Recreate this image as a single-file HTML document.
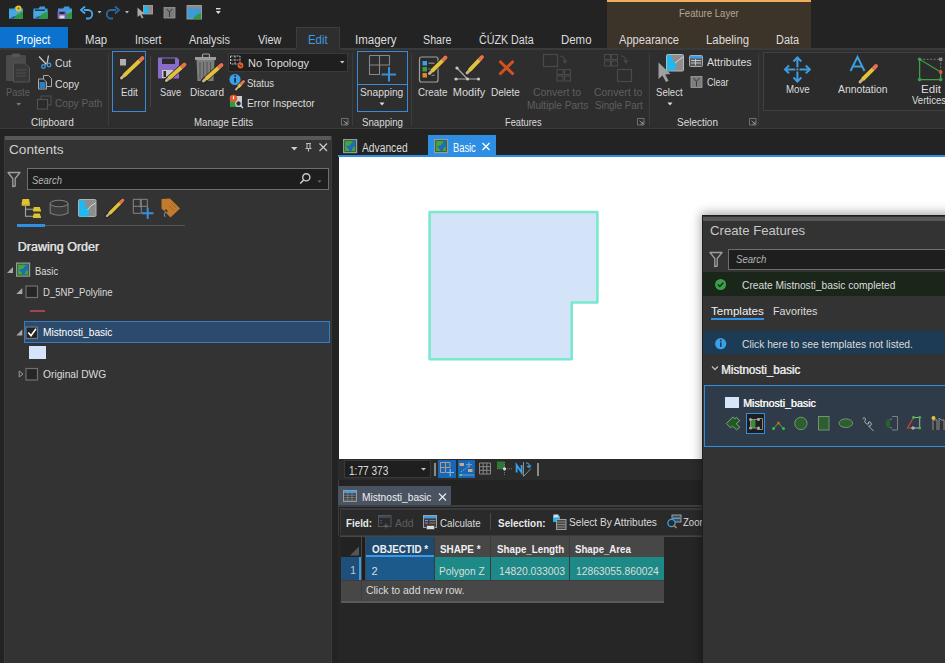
<!DOCTYPE html>
<html><head><meta charset="utf-8">
<style>
*{margin:0;padding:0;box-sizing:border-box}
html,body{width:945px;height:663px;overflow:hidden;background:#1f1f1f;font-family:"Liberation Sans",sans-serif;color:#e6e6e6;position:relative}
.a{position:absolute}
.t{position:absolute;white-space:nowrap}
svg{position:absolute;overflow:visible}
</style></head><body>
<div class="a" style="left:0px;top:0px;width:945px;height:27px;background:#232323;"></div>
<div class="a" style="left:0px;top:27px;width:945px;height:21px;background:#232323;"></div>
<div class="a" style="left:607px;top:0px;width:204px;height:48px;background:#3d3429;"></div>
<div class="a" style="left:607px;top:0px;width:204px;height:1.6px;background:#f0ad5c;"></div>
<div class="t" style="left:678.50px;top:7.89px;font-size:11px;line-height:11px;color:#b3a795;transform:scaleX(0.8725);transform-origin:0 0;">Feature Layer</div>
<div class="a" style="left:0px;top:27px;width:68px;height:21px;background:#0b72cf;"></div>
<div class="t" style="left:15.90px;top:34.24px;font-size:12px;line-height:12px;color:#ffffff;transform:scaleX(0.9184);transform-origin:0 0;">Project</div>
<div class="t" style="left:84.80px;top:34.24px;font-size:12px;line-height:12px;color:#dcdcdc;transform:scaleX(0.9500);transform-origin:0 0;">Map</div>
<div class="t" style="left:134.60px;top:34.24px;font-size:12px;line-height:12px;color:#dcdcdc;transform:scaleX(0.8839);transform-origin:0 0;">Insert</div>
<div class="t" style="left:189.00px;top:34.24px;font-size:12px;line-height:12px;color:#dcdcdc;transform:scaleX(0.9156);transform-origin:0 0;">Analysis</div>
<div class="t" style="left:257.50px;top:34.24px;font-size:12px;line-height:12px;color:#dcdcdc;transform:scaleX(0.9038);transform-origin:0 0;">View</div>
<div class="a" style="left:296px;top:27px;width:44px;height:23px;background:#2e2e2e;border:1px solid #3d3d3d;border-bottom:none"></div>
<div class="t" style="left:307.60px;top:34.24px;font-size:12px;line-height:12px;color:#3f9ae6;transform:scaleX(0.9524);transform-origin:0 0;">Edit</div>
<div class="t" style="left:355.20px;top:34.24px;font-size:12px;line-height:12px;color:#dcdcdc;transform:scaleX(0.9605);transform-origin:0 0;">Imagery</div>
<div class="t" style="left:422.90px;top:34.24px;font-size:12px;line-height:12px;color:#dcdcdc;transform:scaleX(0.8906);transform-origin:0 0;">Share</div>
<div class="t" style="left:478.50px;top:34.24px;font-size:12px;line-height:12px;color:#dcdcdc;transform:scaleX(0.8903);transform-origin:0 0;">ČÚZK Data</div>
<div class="t" style="left:560.70px;top:34.24px;font-size:12px;line-height:12px;color:#dcdcdc;transform:scaleX(0.9531);transform-origin:0 0;">Demo</div>
<div class="t" style="left:619.00px;top:34.24px;font-size:12px;line-height:12px;color:#dcdcdc;transform:scaleX(0.9262);transform-origin:0 0;">Appearance</div>
<div class="t" style="left:705.90px;top:34.24px;font-size:12px;line-height:12px;color:#dcdcdc;transform:scaleX(0.9489);transform-origin:0 0;">Labeling</div>
<div class="t" style="left:776.30px;top:34.24px;font-size:12px;line-height:12px;color:#dcdcdc;transform:scaleX(0.9115);transform-origin:0 0;">Data</div>
<div class="a" style="left:0px;top:48px;width:945px;height:81px;background:#2e2e2e;"></div>
<div class="a" style="left:0px;top:48px;width:296px;height:1.5px;background:#3a3a3a;"></div>
<div class="a" style="left:340px;top:48px;width:605px;height:1.5px;background:#3a3a3a;"></div>
<div class="a" style="left:0px;top:128px;width:945px;height:1px;background:#3a3a3a;"></div>
<div class="a" style="left:108px;top:53px;width:1px;height:73px;background:#3c3c3c;"></div>
<div class="a" style="left:352px;top:53px;width:1px;height:73px;background:#3c3c3c;"></div>
<div class="a" style="left:411px;top:53px;width:1px;height:73px;background:#3c3c3c;"></div>
<div class="a" style="left:649px;top:53px;width:1px;height:73px;background:#3c3c3c;"></div>
<div class="a" style="left:758px;top:53px;width:1px;height:73px;background:#3c3c3c;"></div>
<div class="a" style="left:150px;top:56px;width:1px;height:51px;background:#444;"></div>
<div class="t" style="left:6.00px;top:87.09px;font-size:11px;line-height:11px;color:#5e5e5e;transform:scaleX(0.8464);transform-origin:0 0;">Paste</div>
<div class="t" style="left:54.50px;top:58.29px;font-size:11px;line-height:11px;color:#dcdcdc;transform:scaleX(0.9412);transform-origin:0 0;">Cut</div>
<div class="t" style="left:54.50px;top:78.89px;font-size:11px;line-height:11px;color:#dcdcdc;transform:scaleX(0.9423);transform-origin:0 0;">Copy</div>
<div class="t" style="left:54.50px;top:98.29px;font-size:11px;line-height:11px;color:#5e5e5e;transform:scaleX(0.9216);transform-origin:0 0;">Copy Path</div>
<div class="t" style="left:31.00px;top:116.89px;font-size:11px;line-height:11px;color:#dcdcdc;transform:scaleX(0.9064);transform-origin:0 0;">Clipboard</div>
<div class="a" style="left:112px;top:51px;width:34px;height:61px;background:transparent;border:1px solid #3a8ad8;"></div>
<div class="t" style="left:121.40px;top:87.09px;font-size:11px;line-height:11px;color:#dcdcdc;transform:scaleX(0.8842);transform-origin:0 0;">Edit</div>
<div class="t" style="left:159.50px;top:87.09px;font-size:11px;line-height:11px;color:#dcdcdc;transform:scaleX(0.8400);transform-origin:0 0;">Save</div>
<div class="t" style="left:189.70px;top:87.09px;font-size:11px;line-height:11px;color:#dcdcdc;transform:scaleX(0.9108);transform-origin:0 0;">Discard</div>
<div class="a" style="left:228px;top:52.5px;width:120px;height:19px;background:#1f1f1f;border:1px solid #3a3a3a;"></div>
<div class="t" style="left:248.10px;top:57.99px;font-size:11px;line-height:11px;color:#dcdcdc;">No Topology</div>
<div class="t" style="left:246.80px;top:78.49px;font-size:11px;line-height:11px;color:#dcdcdc;transform:scaleX(0.8688);transform-origin:0 0;">Status</div>
<div class="t" style="left:246.80px;top:98.29px;font-size:11px;line-height:11px;color:#dcdcdc;transform:scaleX(0.9315);transform-origin:0 0;">Error Inspector</div>
<div class="t" style="left:194.40px;top:116.89px;font-size:11px;line-height:11px;color:#dcdcdc;transform:scaleX(0.8765);transform-origin:0 0;">Manage Edits</div>
<div class="a" style="left:357px;top:51px;width:51px;height:61px;background:transparent;border:1px solid #3a8ad8;"></div>
<div class="a" style="left:358px;top:84px;width:49px;height:1px;background:#3a8ad8;"></div>
<div class="t" style="left:359.70px;top:87.09px;font-size:11px;line-height:11px;color:#dcdcdc;transform:scaleX(0.9319);transform-origin:0 0;">Snapping</div>
<div class="t" style="left:361.60px;top:116.89px;font-size:11px;line-height:11px;color:#dcdcdc;transform:scaleX(0.8809);transform-origin:0 0;">Snapping</div>
<div class="t" style="left:417.70px;top:87.09px;font-size:11px;line-height:11px;color:#dcdcdc;transform:scaleX(0.8879);transform-origin:0 0;">Create</div>
<div class="t" style="left:452.80px;top:87.09px;font-size:11px;line-height:11px;color:#dcdcdc;">Modify</div>
<div class="t" style="left:491.20px;top:87.09px;font-size:11px;line-height:11px;color:#dcdcdc;transform:scaleX(0.9094);transform-origin:0 0;">Delete</div>
<div class="t" style="left:533.10px;top:87.09px;font-size:11px;line-height:11px;color:#5e5e5e;transform:scaleX(0.9451);transform-origin:0 0;">Convert to</div>
<div class="t" style="left:526.60px;top:100.49px;font-size:11px;line-height:11px;color:#5e5e5e;transform:scaleX(0.9209);transform-origin:0 0;">Multiple Parts</div>
<div class="t" style="left:594.10px;top:87.09px;font-size:11px;line-height:11px;color:#5e5e5e;transform:scaleX(0.9510);transform-origin:0 0;">Convert to</div>
<div class="t" style="left:594.80px;top:100.49px;font-size:11px;line-height:11px;color:#5e5e5e;transform:scaleX(0.8852);transform-origin:0 0;">Single Part</div>
<div class="t" style="left:504.70px;top:116.89px;font-size:11px;line-height:11px;color:#dcdcdc;transform:scaleX(0.8409);transform-origin:0 0;">Features</div>
<div class="t" style="left:656.00px;top:87.09px;font-size:11px;line-height:11px;color:#dcdcdc;transform:scaleX(0.8710);transform-origin:0 0;">Select</div>
<div class="t" style="left:706.90px;top:57.49px;font-size:11px;line-height:11px;color:#dcdcdc;transform:scaleX(0.9596);transform-origin:0 0;">Attributes</div>
<div class="t" style="left:706.90px;top:77.49px;font-size:11px;line-height:11px;color:#dcdcdc;transform:scaleX(0.8185);transform-origin:0 0;">Clear</div>
<div class="t" style="left:676.70px;top:116.89px;font-size:11px;line-height:11px;color:#dcdcdc;transform:scaleX(0.9044);transform-origin:0 0;">Selection</div>
<div class="a" style="left:763px;top:52px;width:190px;height:59px;background:#2b2b2b;border:1px solid #404040;"></div>
<div class="t" style="left:785.60px;top:83.89px;font-size:11px;line-height:11px;color:#dcdcdc;transform:scaleX(0.8815);transform-origin:0 0;">Move</div>
<div class="t" style="left:838.00px;top:83.89px;font-size:11px;line-height:11px;color:#dcdcdc;transform:scaleX(0.9415);transform-origin:0 0;">Annotation</div>
<div class="t" style="left:921.00px;top:83.89px;font-size:11px;line-height:11px;color:#dcdcdc;transform:scaleX(1.0526);transform-origin:0 0;">Edit</div>
<div class="t" style="left:912.00px;top:95.09px;font-size:11px;line-height:11px;color:#dcdcdc;transform:scaleX(0.8700);transform-origin:0 0;">Vertices</div>
<div class="a" style="left:0px;top:129px;width:945px;height:534px;background:#232323;"></div>
<div class="a" style="left:4px;top:136px;width:328px;height:527px;background:#3a3a3a;"></div>
<div class="a" style="left:5px;top:136px;width:326px;height:527px;background:#333333;"></div>
<div class="a" style="left:5px;top:136px;width:326px;height:4px;background:#585858;"></div>
<div class="t" style="left:9.40px;top:143.00px;font-size:13px;line-height:13px;color:#cfcfcf;transform:scaleX(1.0509);transform-origin:0 0;">Contents</div>
<div class="a" style="left:27px;top:168px;width:302px;height:22px;background:#1e1e1e;border:1px solid #6e6e6e;"></div>
<div class="t" style="left:32.00px;top:174.69px;font-size:11px;line-height:11px;color:#b5b5b5;font-style:italic;transform:scaleX(0.8571);transform-origin:0 0;">Search</div>
<div class="a" style="left:17px;top:224px;width:28px;height:3px;background:#2f8fe3;"></div>
<div class="a" style="left:45px;top:225px;width:140px;height:1px;background:#555;"></div>
<div class="t" style="left:17.60px;top:240.72px;font-size:12.5px;line-height:12.5px;color:#dedede;text-shadow:0.5px 0 0 #dedede">Drawing Order</div>
<div class="t" style="left:35.00px;top:265.77px;font-size:11.5px;line-height:11.5px;color:#dcdcdc;transform:scaleX(0.8214);transform-origin:0 0;">Basic</div>
<div class="t" style="left:42.50px;top:286.77px;font-size:11.5px;line-height:11.5px;color:#dcdcdc;transform:scaleX(0.8310);transform-origin:0 0;">D_5NP_Polyline</div>
<div class="a" style="left:30px;top:310px;width:15px;height:2px;background:#a04848;"></div>
<div class="a" style="left:24px;top:321px;width:306px;height:22px;background:#2b4a6c;border:1px solid #3a7cc0;"></div>
<div class="t" style="left:42.50px;top:327.37px;font-size:11.5px;line-height:11.5px;color:#ffffff;transform:scaleX(0.8835);transform-origin:0 0;">Mistnosti_basic</div>
<div class="a" style="left:29px;top:346px;width:17px;height:13px;background:#d5e4fa;"></div>
<div class="t" style="left:42.50px;top:368.87px;font-size:11.5px;line-height:11.5px;color:#dcdcdc;transform:scaleX(0.8915);transform-origin:0 0;">Original DWG</div>
<div class="a" style="left:338px;top:459px;width:1px;height:204px;background:#3d3d3d;"></div>
<div class="t" style="left:361.70px;top:141.64px;font-size:12px;line-height:12px;color:#dcdcdc;transform:scaleX(0.8547);transform-origin:0 0;">Advanced</div>
<div class="a" style="left:428px;top:135px;width:68px;height:20px;background:#2d8ee3;"></div>
<div class="t" style="left:452.50px;top:141.64px;font-size:12px;line-height:12px;color:#ffffff;transform:scaleX(0.7759);transform-origin:0 0;">Basic</div>
<div class="a" style="left:338px;top:155px;width:607px;height:2px;background:#2d8ee3;"></div>
<div class="a" style="left:339px;top:157px;width:606px;height:302px;background:#ffffff;"></div>
<svg style="left:420px;top:200px" width="200" height="170" viewBox="0 0 200 170"><path d="M9.6 12 H177.4 V102.5 H151.7 V159.2 H9.6 Z" fill="#d3e3f8" stroke="#7ae8cc" stroke-width="2.6" stroke-linejoin="round"/></svg>
<div class="a" style="left:338px;top:459px;width:607px;height:21px;background:#2b2b2b;"></div>
<div class="a" style="left:344px;top:460px;width:87px;height:18px;background:#1f1f1f;border:1px solid #3a3a3a;"></div>
<div class="t" style="left:349.00px;top:464.74px;font-size:12px;line-height:12px;color:#dcdcdc;transform:scaleX(0.8404);transform-origin:0 0;">1:77 373</div>
<div class="a" style="left:434px;top:463px;width:2px;height:13px;background:#8a8a8a;"></div>
<div class="a" style="left:438px;top:460px;width:18px;height:18px;background:#1667b8;"></div>
<div class="a" style="left:458px;top:460px;width:17px;height:18px;background:#1667b8;"></div>
<div class="a" style="left:537px;top:463px;width:2px;height:13px;background:#8a8a8a;"></div>
<div class="a" style="left:338px;top:486px;width:113px;height:19px;background:#4a5361;"></div>
<div class="t" style="left:361.50px;top:491.57px;font-size:11.5px;line-height:11.5px;color:#f0f0f0;transform:scaleX(0.8835);transform-origin:0 0;">Mistnosti_basic</div>
<div class="a" style="left:338px;top:505px;width:364px;height:2px;background:#3b3f45;"></div>
<div class="a" style="left:339.5px;top:508px;width:363px;height:28px;background:#3a3a3a;"></div>
<div class="a" style="left:341px;top:509.5px;width:361px;height:25px;background:#2a2a2a;"></div>
<div class="t" style="left:345.60px;top:517.59px;font-size:11px;line-height:11px;color:#e8e8e8;font-weight:bold;transform:scaleX(0.8897);transform-origin:0 0;">Field:</div>
<div class="t" style="left:394.90px;top:517.59px;font-size:11px;line-height:11px;color:#5e5e5e;transform:scaleX(0.9550);transform-origin:0 0;">Add</div>
<div class="t" style="left:439.80px;top:517.59px;font-size:11px;line-height:11px;color:#dcdcdc;transform:scaleX(0.8870);transform-origin:0 0;">Calculate</div>
<div class="a" style="left:490px;top:513px;width:1px;height:17px;background:#4a4a4a;"></div>
<div class="t" style="left:497.50px;top:517.59px;font-size:11px;line-height:11px;color:#e8e8e8;font-weight:bold;transform:scaleX(0.9038);transform-origin:0 0;">Selection:</div>
<div class="t" style="left:568.50px;top:517.49px;font-size:11px;line-height:11px;color:#dcdcdc;transform:scaleX(0.9219);transform-origin:0 0;">Select By Attributes</div>
<div class="t" style="left:682.80px;top:517.49px;font-size:11px;line-height:11px;color:#dcdcdc;transform:scaleX(0.8700);transform-origin:0 0;">Zoom To</div>
<div class="a" style="left:338px;top:536px;width:364px;height:127px;background:#262626;"></div>
<div class="a" style="left:340px;top:536px;width:364px;height:1px;background:#474747;"></div>
<div class="a" style="left:341px;top:537px;width:323px;height:65px;background:#474747;"></div>
<div class="a" style="left:341px;top:601px;width:323px;height:1.5px;background:#5a5a5a;"></div>
<div class="a" style="left:341px;top:537px;width:19.5px;height:20px;background:#222222;"></div>
<div class="a" style="left:362px;top:537px;width:3px;height:43px;background:#1e1e1e;"></div>
<div class="a" style="left:366px;top:537px;width:68px;height:20px;background:#1f4a70;"></div>
<div class="a" style="left:366px;top:555px;width:68px;height:2px;background:#3c9be8;"></div>
<div class="t" style="left:371.90px;top:543.79px;font-size:11px;line-height:11px;color:#f0f0f0;font-weight:bold;transform:scaleX(0.8922);transform-origin:0 0;">OBJECTID *</div>
<div class="t" style="left:439.60px;top:543.79px;font-size:11px;line-height:11px;color:#f0f0f0;font-weight:bold;transform:scaleX(0.8957);transform-origin:0 0;">SHAPE *</div>
<div class="t" style="left:496.50px;top:543.79px;font-size:11px;line-height:11px;color:#f0f0f0;font-weight:bold;transform:scaleX(0.8882);transform-origin:0 0;">Shape_Length</div>
<div class="t" style="left:575.30px;top:543.79px;font-size:11px;line-height:11px;color:#f0f0f0;font-weight:bold;transform:scaleX(0.8785);transform-origin:0 0;">Shape_Area</div>
<div class="a" style="left:341px;top:557px;width:18px;height:23px;background:#1e4f78;"></div>
<div class="a" style="left:359px;top:557px;width:2px;height:23px;background:#3c9be8;"></div>
<div class="t" style="left:349.90px;top:564.99px;font-size:11px;line-height:11px;color:#b8c8d8;">1</div>
<div class="a" style="left:366px;top:557px;width:68px;height:23px;background:#1c5a8c;"></div>
<div class="a" style="left:434px;top:557px;width:230px;height:23px;background:#1d8a87;"></div>
<div class="a" style="left:433.5px;top:537px;width:1px;height:43px;background:#3a3a3a;"></div>
<div class="a" style="left:490px;top:537px;width:1px;height:43px;background:#3a3a3a;"></div>
<div class="a" style="left:569px;top:537px;width:1px;height:43px;background:#3a3a3a;"></div>
<div class="a" style="left:341px;top:579.5px;width:323px;height:1px;background:#3c3c3c;"></div>
<div class="a" style="left:360.5px;top:580px;width:1px;height:21px;background:#3c3c3c;"></div>
<div class="t" style="left:371.40px;top:566.49px;font-size:11px;line-height:11px;color:#dcdcdc;">2</div>
<div class="t" style="left:439.40px;top:566.49px;font-size:11px;line-height:11px;color:#dcdcdc;transform:scaleX(0.9200);transform-origin:0 0;">Polygon Z</div>
<div class="t" style="left:499.00px;top:566.49px;font-size:11px;line-height:11px;color:#dcdcdc;transform:scaleX(0.9371);transform-origin:0 0;">14820.033003</div>
<div class="t" style="left:575.50px;top:566.49px;font-size:11px;line-height:11px;color:#dcdcdc;transform:scaleX(0.9337);transform-origin:0 0;">12863055.860024</div>
<div class="t" style="left:365.50px;top:585.49px;font-size:11px;line-height:11px;color:#dcdcdc;transform:scaleX(0.9471);transform-origin:0 0;">Click to add new row.</div>
<div class="a" style="left:703px;top:215px;width:260px;height:460px;box-shadow:0 0 10px 2px rgba(0,0,0,0.35)"></div>
<div class="a" style="left:702px;top:215px;width:243px;height:448px;background:#1e1e1e;"></div>
<div class="a" style="left:703px;top:216px;width:242px;height:447px;background:#333333;"></div>
<div class="a" style="left:703px;top:217px;width:242px;height:4px;background:#585858;"></div>
<div class="t" style="left:709.80px;top:224.10px;font-size:13px;line-height:13px;color:#c8c8c8;transform:scaleX(1.0128);transform-origin:0 0;">Create Features</div>
<div class="a" style="left:728px;top:249px;width:220px;height:21px;background:#1e1e1e;border:1px solid #6e6e6e;"></div>
<div class="t" style="left:736.00px;top:253.99px;font-size:11px;line-height:11px;color:#b5b5b5;font-style:italic;transform:scaleX(0.8743);transform-origin:0 0;">Search</div>
<div class="a" style="left:703px;top:272px;width:242px;height:24px;background:#1b261b;"></div>
<div class="t" style="left:741.70px;top:279.99px;font-size:11px;line-height:11px;color:#dcdcdc;transform:scaleX(0.9291);transform-origin:0 0;">Create Mistnosti_basic completed</div>
<div class="t" style="left:710.90px;top:306.17px;font-size:11.5px;line-height:11.5px;color:#f0f0f0;transform:scaleX(1.0075);transform-origin:0 0;">Templates</div>
<div class="t" style="left:773.40px;top:306.17px;font-size:11.5px;line-height:11.5px;color:#dcdcdc;transform:scaleX(0.9396);transform-origin:0 0;">Favorites</div>
<div class="a" style="left:711px;top:318px;width:53px;height:2px;background:#2f8fe3;"></div>
<div class="a" style="left:703px;top:331px;width:242px;height:23px;background:#1d3b54;"></div>
<div class="t" style="left:741.50px;top:339.09px;font-size:11px;line-height:11px;color:#dcdcdc;transform:scaleX(0.9350);transform-origin:0 0;">Click here to see templates not listed.</div>
<div class="t" style="left:720.70px;top:363.64px;font-size:12px;line-height:12px;color:#e4e4e4;transform:scaleX(0.9646);transform-origin:0 0;text-shadow:0.45px 0 0 #e4e4e4">Mistnosti_basic</div>
<div class="a" style="left:704px;top:385px;width:250px;height:62px;background:#2f3b49;border:1.6px solid #2e8ee0;"></div>
<div class="a" style="left:725px;top:397px;width:14px;height:11px;background:#d7e5fb;"></div>
<div class="t" style="left:743.30px;top:398.19px;font-size:11px;line-height:11px;color:#f4f4f4;transform:scaleX(0.9658);transform-origin:0 0;text-shadow:0.45px 0 0 #f4f4f4">Mistnosti_basic</div>
<div class="a" style="left:746px;top:413px;width:19px;height:21px;background:#1e1e1e;border:1px solid #2e8ee0;"></div>
<svg style="left:0;top:0" width="945" height="663" viewBox="0 0 945 663"><path d="M9 8.5 h5 l1.5 -2 h5 v2 h2.5 v10 h-14 z" fill="#3a9bd6"/><path d="M9 10.5 h14 v8 h-14 z" fill="#4aa8e0"/><path d="M13 18.5 q4 -5 10 -7 v7 z" fill="#2e9a3c"/><path d="M10 18.5 q3 -3 6 -2 l-2 2 z" fill="#1f5f9a"/><circle cx="18.5" cy="8.5" r="3" fill="#e6c43a"/><circle cx="18.5" cy="8.5" r="1.2" fill="#9a7a10"/><path d="M33.5 8.5 h5 l1.5 -2 h5 v2 h2.5 v10 h-14 z" fill="#3a9bd6"/><path d="M33.5 10.5 h14 v8 h-14 z" fill="#4aa8e0"/><path d="M37.5 18.5 q4 -5 10 -7 v7 z" fill="#2e9a3c"/><path d="M34.5 18.5 q3 -3 6 -2 l-2 2 z" fill="#1f5f9a"/><path d="M35 9.5 h10 v1.5 h-10z" fill="#1f3a55"/><path d="M58 8.5 h5 l1.5 -2 h5 v2 h2.5 v10 h-14 z" fill="#3a9bd6"/><path d="M58 10.5 h14 v8 h-14 z" fill="#4aa8e0"/><path d="M62 18.5 q4 -5 10 -7 v7 z" fill="#2e9a3c"/><path d="M59 18.5 q3 -3 6 -2 l-2 2 z" fill="#1f5f9a"/><rect x="57.5" y="11" width="9" height="8" rx="1" fill="#7b5fb8"/><rect x="59.5" y="15.5" width="5" height="3" fill="#ddd"/><rect x="59.5" y="12" width="5" height="2" fill="#2a2a2a"/><path d="M84 10 H88 A4.2 4.2 0 0 1 88 18.5 H86" fill="none" stroke="#4aa8e8" stroke-width="1.8"/><path d="M85 6.5 L81 10 L85 13.5" fill="none" stroke="#4aa8e8" stroke-width="1.8"/><path d="M97.5 11 h4 l-2 2.5z" fill="#bbb"/><path d="M116 10 H111 A4.2 4.2 0 0 0 111 18.5 H113" fill="none" stroke="#2a6a9e" stroke-width="1.8"/><path d="M115 6.5 L119 10 L115 13.5" fill="none" stroke="#2a6a9e" stroke-width="1.8"/><path d="M125 11 h4 l-2 2.5z" fill="#bbb"/><rect x="143.5" y="5.5" width="9" height="8.5" fill="#8a8a8a" stroke="#aaa" stroke-width="0.8"/><path d="M144 6 h3 l1.5 4 l-1 4 h-3.5z" fill="#22b8ee"/><path d="M137.5 7.5 L137.5 17 L140 15 L142 18.5 L143.5 17.8 L141.6 14.3 L144.8 14 Z" fill="#a8a8a8"/><rect x="164" y="7.5" width="11" height="10.5" fill="#7c7c7c" stroke="#9a9a9a" stroke-width="0.8"/><path d="M167 9 l2.5 3 v5 M172 9 l-2.5 3" stroke="#333" stroke-width="0.9" fill="none"/><rect x="187" y="5.5" width="14.5" height="13.5" fill="#3a9bd6" stroke="#9a9a9a" stroke-width="1"/><rect x="187.5" y="6" width="13.5" height="2.5" fill="#8a8a8a"/><path d="M193 19 q3 -5 8 -6 v6z" fill="#2e9a3c"/><rect x="216" y="8" width="4.5" height="1.4" fill="#ddd"/><path d="M215.8 11 h5 l-2.5 3z" fill="#ddd"/><rect x="6" y="55" width="20" height="26" rx="1.5" fill="#4b4b4b"/><rect x="12" y="53.5" width="8" height="3.5" rx="1" fill="#555"/><path d="M13.5 63 h11 l5 5 v14 h-16z" fill="#383838" stroke="#555" stroke-width="1"/><path d="M16 70 h10 M16 73 h10 M16 76 h10" stroke="#4e4e4e" stroke-width="1"/><path d="M16.5 103 h4.5 l-2.25 2.5z" fill="#777"/><path d="M39 56.5 L46.5 64.5 M48.5 55.5 L47 64" stroke="#c8c8c8" stroke-width="1.3" fill="none"/><circle cx="43.5" cy="66.5" r="1.8" fill="none" stroke="#3a9ee8" stroke-width="1.3"/><circle cx="49" cy="65" r="1.8" fill="none" stroke="#3a9ee8" stroke-width="1.3"/><path d="M43.5 75.5 h5 l3 3 v8 h-8z" fill="#2b2b2b" stroke="#aaa" stroke-width="1"/><path d="M38.5 79 h5 l3 3 v7 h-8z" fill="#2b2b2b" stroke="#aaa" stroke-width="1"/><rect x="39.5" y="82" width="6" height="6.5" fill="#2f7fc0"/><rect x="41" y="96" width="10" height="9" fill="none" stroke="#4e4e4e" stroke-width="1"/><rect x="37.5" y="99.5" width="10" height="9.5" fill="#2b2b2b" stroke="#555" stroke-width="1"/><rect x="120" y="59" width="6" height="6.5" fill="#b0b0b0"/><line x1="121.5" y1="78.0" x2="142.5" y2="58.0" stroke="#262626" stroke-width="5.4" stroke-linecap="round"/><line x1="121.5" y1="78.0" x2="124.0" y2="75.6" stroke="#c9b48a" stroke-width="3" stroke-linecap="round"/><line x1="124.0" y1="75.6" x2="139.6" y2="60.8" stroke="#e2c23c" stroke-width="4"/><line x1="139.6" y1="60.8" x2="140.7" y2="59.7" stroke="#8a8a8a" stroke-width="4"/><line x1="140.7" y1="59.7" x2="142.5" y2="58.0" stroke="#e8704a" stroke-width="4" stroke-linecap="round"/><path d="M158 57.5 h19 l2 2 v19 h-21z" fill="#8a6cc8"/><rect x="162" y="58.5" width="13" height="5.5" fill="#2b2b2b"/><rect x="162" y="70" width="11" height="8" fill="#c8c8c8"/><rect x="163.5" y="71" width="2.5" height="6" fill="#2b2b2b"/><line x1="166.5" y1="80.5" x2="184.5" y2="64.5" stroke="#262626" stroke-width="5.4" stroke-linecap="round"/><line x1="166.5" y1="80.5" x2="169.1" y2="78.2" stroke="#c9b48a" stroke-width="3" stroke-linecap="round"/><line x1="169.1" y1="78.2" x2="181.5" y2="67.2" stroke="#e2c23c" stroke-width="4"/><line x1="181.5" y1="67.2" x2="182.6" y2="66.2" stroke="#8a8a8a" stroke-width="4"/><line x1="182.6" y1="66.2" x2="184.5" y2="64.5" stroke="#e8704a" stroke-width="4" stroke-linecap="round"/><rect x="202.5" y="54" width="7" height="3.5" rx="1" fill="none" stroke="#a0a0a0" stroke-width="1.2"/><rect x="195" y="57" width="21" height="3" fill="#9c9c9c"/><path d="M196.5 60 h18 l-1 21 h-16z" fill="#7e7e7e"/><path d="M200 62 v17 M203.5 62 v17 M207 62 v17 M210.5 62 v17" stroke="#5a5a5a" stroke-width="1.2"/><line x1="203.5" y1="81.0" x2="221.5" y2="65.0" stroke="#262626" stroke-width="5.4" stroke-linecap="round"/><line x1="203.5" y1="81.0" x2="206.1" y2="78.7" stroke="#c9b48a" stroke-width="3" stroke-linecap="round"/><line x1="206.1" y1="78.7" x2="218.5" y2="67.7" stroke="#e2c23c" stroke-width="4"/><line x1="218.5" y1="67.7" x2="219.6" y2="66.7" stroke="#8a8a8a" stroke-width="4"/><line x1="219.6" y1="66.7" x2="221.5" y2="65.0" stroke="#e8704a" stroke-width="4" stroke-linecap="round"/><rect x="230.5" y="56" width="9.5" height="8" fill="none" stroke="#bbb" stroke-width="1" stroke-dasharray="2 1"/><path d="M235 56 v8 M230.5 60 h9.5" stroke="#bbb" stroke-width="0.8" stroke-dasharray="2 1"/><circle cx="240.5" cy="65.5" r="2.9" fill="#e05a28"/><path d="M239 64.5 l3 2" stroke="#222" stroke-width="0.9"/><path d="M340 61 h4.5 l-2.25 2.5z" fill="#ccc"/><circle cx="235" cy="79.5" r="5.6" fill="#3a9ee8"/><rect x="234.2" y="78" width="1.8" height="4.5" fill="#1e2a38"/><circle cx="235.1" cy="76" r="1" fill="#1e2a38"/><line x1="236.0" y1="89.5" x2="243.5" y2="81.5" stroke="#262626" stroke-width="4.4" stroke-linecap="round"/><line x1="236.0" y1="89.5" x2="238.4" y2="86.9" stroke="#c9b48a" stroke-width="2" stroke-linecap="round"/><line x1="238.4" y1="86.9" x2="240.8" y2="84.4" stroke="#e2c23c" stroke-width="3"/><line x1="240.8" y1="84.4" x2="241.8" y2="83.3" stroke="#8a8a8a" stroke-width="3"/><line x1="241.8" y1="83.3" x2="243.5" y2="81.5" stroke="#e8704a" stroke-width="3" stroke-linecap="round"/><rect x="230" y="96" width="12" height="11" fill="#3a9ee8"/><rect x="230" y="101.5" width="6" height="5.5" fill="#2e9a3c"/><rect x="236" y="96" width="6" height="5.5" fill="#cfcfcf"/><circle cx="233.5" cy="98.5" r="3.8" fill="#e05a28"/><rect x="232.9" y="96.2" width="1.2" height="3" fill="#fff"/><circle cx="238.5" cy="103.5" r="2.8" fill="#2b2b2b" stroke="#ddd" stroke-width="1.1"/><path d="M240.5 105.5 l2.5 2.5" stroke="#ddd" stroke-width="1.3"/><path d="M341.5 118.5 h6.5 v6.5 h-6.5z" fill="none" stroke="#777" stroke-width="0.9"/><path d="M343.5 120.5 l3.5 3.5 M347 121.5 v2.5 h-2.5" stroke="#999" stroke-width="0.9" fill="none"/><path d="M637.5 118.5 h6.5 v6.5 h-6.5z" fill="none" stroke="#777" stroke-width="0.9"/><path d="M639.5 120.5 l3.5 3.5 M643 121.5 v2.5 h-2.5" stroke="#999" stroke-width="0.9" fill="none"/><path d="M749.5 118.5 h6.5 v6.5 h-6.5z" fill="none" stroke="#777" stroke-width="0.9"/><path d="M751.5 120.5 l3.5 3.5 M755 121.5 v2.5 h-2.5" stroke="#999" stroke-width="0.9" fill="none"/><path d="M369.5 55.5 h20 v10 M369.5 55.5 v19 h10 v-19 M369.5 65 h20 M379.5 55.5 v10" fill="none" stroke="#888" stroke-width="1.1"/><path d="M381.5 74.5 h14.5 M389 67 v14.5" stroke="#3a90d8" stroke-width="2"/><path d="M379.5 102.5 h5 l-2.5 3z" fill="#ddd"/><rect x="419.5" y="57" width="18.5" height="25" rx="2" fill="#2b2b2b" stroke="#a0a0a0" stroke-width="1.2"/><rect x="422.5" y="61" width="4.5" height="4.5" fill="#3a9ee8"/><rect x="422.5" y="67" width="4.5" height="4.5" fill="#3aa04a"/><rect x="422.5" y="73" width="4.5" height="4.5" fill="#e08a28"/><path d="M428.5 63.2 h6 M428.5 69.2 h3 M428.5 75.2 h6" stroke="#a0a0a0" stroke-width="1"/><line x1="429.5" y1="73.5" x2="445.5" y2="57.5" stroke="#262626" stroke-width="5.4" stroke-linecap="round"/><line x1="429.5" y1="73.5" x2="432.0" y2="71.0" stroke="#c9b48a" stroke-width="3" stroke-linecap="round"/><line x1="432.0" y1="71.0" x2="442.7" y2="60.3" stroke="#e2c23c" stroke-width="4"/><line x1="442.7" y1="60.3" x2="443.7" y2="59.3" stroke="#8a8a8a" stroke-width="4"/><line x1="443.7" y1="59.3" x2="445.5" y2="57.5" stroke="#e8704a" stroke-width="4" stroke-linecap="round"/><path d="M457 68 L467.5 79 M456 79 H478.5" stroke="#a8a8a8" stroke-width="1.2"/><circle cx="457" cy="68" r="1.6" fill="#c8c8c8"/><circle cx="456" cy="79" r="1.6" fill="#c8c8c8"/><circle cx="467.5" cy="79" r="1.6" fill="#c8c8c8"/><circle cx="478.5" cy="79" r="1.6" fill="#c8c8c8"/><line x1="467.0" y1="73.0" x2="482.0" y2="57.0" stroke="#262626" stroke-width="5.4" stroke-linecap="round"/><line x1="467.0" y1="73.0" x2="469.4" y2="70.4" stroke="#c9b48a" stroke-width="3" stroke-linecap="round"/><line x1="469.4" y1="70.4" x2="479.3" y2="59.9" stroke="#e2c23c" stroke-width="4"/><line x1="479.3" y1="59.9" x2="480.3" y2="58.8" stroke="#8a8a8a" stroke-width="4"/><line x1="480.3" y1="58.8" x2="482.0" y2="57.0" stroke="#e8704a" stroke-width="4" stroke-linecap="round"/><path d="M499.5 61 L513.5 74.5 M513.5 61 L499.5 74.5" stroke="#d4501f" stroke-width="3"/><rect x="543.5" y="54.5" width="14" height="12" fill="none" stroke="#4a4a4a" stroke-width="1.2"/><path d="M560 56 q5 0 5 6 M563 60 l2 3 l2 -3" fill="none" stroke="#4a4a4a" stroke-width="1.1"/><rect x="557" y="69.5" width="6" height="5" fill="none" stroke="#4a4a4a" stroke-width="1.1"/><rect x="564.5" y="69.5" width="6" height="5" fill="none" stroke="#4a4a4a" stroke-width="1.1"/><rect x="557" y="76" width="6" height="5" fill="none" stroke="#4a4a4a" stroke-width="1.1"/><rect x="564.5" y="76" width="6" height="5" fill="none" stroke="#4a4a4a" stroke-width="1.1"/><rect x="604.5" y="54.5" width="6" height="5" fill="none" stroke="#4a4a4a" stroke-width="1.1"/><rect x="611.5" y="54.5" width="6" height="5" fill="none" stroke="#4a4a4a" stroke-width="1.1"/><rect x="604.5" y="61" width="6" height="5" fill="none" stroke="#4a4a4a" stroke-width="1.1"/><rect x="611.5" y="61" width="6" height="5" fill="none" stroke="#4a4a4a" stroke-width="1.1"/><path d="M621 56 q5 0 5 6 M624 60 l2 3 l2 -3" fill="none" stroke="#4a4a4a" stroke-width="1.1"/><rect x="617.5" y="69.5" width="14" height="12" fill="none" stroke="#4a4a4a" stroke-width="1.2"/><rect x="666.5" y="54.5" width="17" height="16.5" rx="1" fill="#8e8e8e" stroke="#b8b8b8" stroke-width="1"/><path d="M667 55 h4 q1 6 4.5 8 q1 5 -1 7.5 h-7.5z" fill="#20b8f0"/><path d="M675 63 q4 -3 8 -6" stroke="#ddd" stroke-width="0.9" fill="none"/><path d="M658.5 62.5 L658.5 79 L662.5 75.5 L666 82 L668.5 80.8 L665.2 74.5 L670.5 74 Z" fill="#a0a0a0"/><path d="M667.5 102.5 h5 l-2.5 3z" fill="#ddd"/><rect x="689.5" y="55.5" width="13" height="11" rx="1" fill="#5a5a5a" stroke="#aaa" stroke-width="1"/><rect x="690" y="56" width="12" height="2.5" fill="#3a9ee8"/><path d="M691 60.5 h10 M691 63 h10 M695.5 59 v6.5" stroke="#ccc" stroke-width="0.9"/><rect x="691" y="76.5" width="11" height="11" fill="#7c7c7c" stroke="#a0a0a0" stroke-width="0.8"/><path d="M693.5 78 l3 3.5 v5 M699.5 78 l-3 3.5" stroke="#333" stroke-width="0.9" fill="none"/><path d="M797.4 58 V81.5 M785.5 69.4 H809.5" stroke="#3a9ee0" stroke-width="2"/><path d="M793.5 61.5 L797.4 57.5 L801.3 61.5 M793.5 77.5 L797.4 81.5 L801.3 77.5 M789 65.5 L785 69.4 L789 73.3 M805.8 65.5 L809.8 69.4 L805.8 73.3" stroke="#3a9ee0" stroke-width="2" fill="none"/><rect x="795.4" y="67.4" width="4" height="4" fill="#2b2b2b"/><rect x="796.6" y="68.6" width="1.6" height="1.6" fill="#aaa"/><path d="M850.5 71 L857.5 57 L864.5 71 M852.8 66.5 h9.4" stroke="#3a9ee0" stroke-width="2" fill="none"/><line x1="860.0" y1="82.0" x2="876.0" y2="66.0" stroke="#262626" stroke-width="5.4" stroke-linecap="round"/><line x1="860.0" y1="82.0" x2="862.5" y2="79.5" stroke="#c9b48a" stroke-width="3" stroke-linecap="round"/><line x1="862.5" y1="79.5" x2="873.2" y2="68.8" stroke="#e2c23c" stroke-width="4"/><line x1="873.2" y1="68.8" x2="874.2" y2="67.8" stroke="#8a8a8a" stroke-width="4"/><line x1="874.2" y1="67.8" x2="876.0" y2="66.0" stroke="#e8704a" stroke-width="4" stroke-linecap="round"/><path d="M919.6 59.3 H940.7 V72" stroke="#777" stroke-width="1" stroke-dasharray="2 1.5" fill="none"/><path d="M940.7 72 V79.6 H919.6 V59.3 L940.7 72" stroke="#3aa04a" stroke-width="1.3" fill="none"/><circle cx="919.6" cy="59.3" r="1.8" fill="#3aa04a"/><circle cx="919.6" cy="79.6" r="1.8" fill="#3aa04a"/><circle cx="940.7" cy="79.6" r="1.8" fill="#3aa04a"/><circle cx="940.7" cy="72" r="1.9" fill="#e05a28"/><rect x="939" y="57.6" width="3.4" height="3.4" fill="#888"/><path d="M16.5 103 h4.5 l-2.25 2.5z" fill="#777"/></svg>
<svg style="left:0;top:0" width="945" height="663" viewBox="0 0 945 663"><path d="M291 147 h6.5 l-3.25 3.5z" fill="#ccc"/><path d="M306 143.5 h5 M307 143.5 v5 M310 143.5 v5 M305.5 148.5 h6 M308.5 148.5 v3" stroke="#bbb" stroke-width="1.1" fill="none"/><path d="M319.5 143.5 L327 151 M327 143.5 L319.5 151" stroke="#ccc" stroke-width="1.2"/><circle cx="306.3" cy="177.3" r="3.6" fill="none" stroke="#ccc" stroke-width="1.4"/><path d="M303.7 180 L300.2 183.5" stroke="#ccc" stroke-width="1.6"/><path d="M317.5 180.5 h4 l-2 2z" fill="#777"/><path d="M8 172.5 h12 l-4.8 6 v7.5 l-2.4 0.5 v-8z" fill="none" stroke="#a0a0a0" stroke-width="1.3" stroke-linejoin="round"/><path d="M22.5 199 h6.5 l1 5.5 h-8.5z" fill="#e0c32e"/><rect x="21.8" y="204.2" width="8" height="1.6" fill="#e0c32e"/><path d="M25.5 206 V216.2 H33 M25.5 209.2 H33" stroke="#a8a8a8" stroke-width="1.1" fill="none"/><path d="M33.8 207 h6 l1 3.5 h-8z" fill="#e0c32e"/><rect x="33" y="210" width="8" height="1.5" fill="#e0c32e"/><path d="M33.8 213.5 h6 l1 3.5 h-8z" fill="#e0c32e"/><rect x="33" y="216.5" width="8" height="1.5" fill="#e0c32e"/><path d="M50.2 203.5 v9.5 q9 4.5 17.8 0 v-9.5" fill="#3c3c3c" stroke="#7c7c7c" stroke-width="1.1"/><ellipse cx="59.1" cy="203.5" rx="8.9" ry="3.3" fill="#333" stroke="#7c7c7c" stroke-width="1.1"/><rect x="78.5" y="199.5" width="17.5" height="17" rx="1.3" fill="#8e8e8e" stroke="#b0b0b0" stroke-width="1"/><path d="M79 200 h5 q1 7 4.5 9.5 q1.5 4 0 7 h-9.5z" fill="#1fb9f0"/><path d="M87.5 210 q3 -5 8 -7" stroke="#ddd" stroke-width="0.9" fill="none"/><line x1="107.0" y1="216.0" x2="122.8" y2="200.2" stroke="#262626" stroke-width="4.699999999999999" stroke-linecap="round"/><line x1="107.0" y1="216.0" x2="109.5" y2="213.5" stroke="#c9b48a" stroke-width="2.3" stroke-linecap="round"/><line x1="109.5" y1="213.5" x2="120.0" y2="203.0" stroke="#e2c23c" stroke-width="3.3"/><line x1="120.0" y1="203.0" x2="121.0" y2="202.0" stroke="#8a8a8a" stroke-width="3.3"/><line x1="121.0" y1="202.0" x2="122.8" y2="200.2" stroke="#e8704a" stroke-width="3.3" stroke-linecap="round"/><path d="M133.3 199.3 h14 v8.5 M133.3 199.3 v14 h8 v-14 M133.3 206.3 h14 M140.3 199.3 v8" fill="none" stroke="#888" stroke-width="1"/><path d="M142 213.2 h11.5 M147.7 207.5 v11.5" stroke="#3a90d8" stroke-width="2"/><path d="M170 198.5 L180 208.5 L170.5 217.5 L161.5 208.5 V199 Z" fill="#c27a2c" transform="rotate(0)"/><circle cx="166" cy="211" r="1.6" fill="#333"/><path d="M166 211 q-3 4 -1 6" stroke="#aaa" stroke-width="0.8" fill="none"/><path d="M171 203 l5 5 M169 205.5 l5 5" stroke="#a0641f" stroke-width="0.9"/><path d="M13 267 V273 H7 Z" fill="#a8a8a8"/><path d="M22.3 288 V294 H16.3 Z" fill="#a8a8a8"/><path d="M22.3 329.5 V335.5 H16.3 Z" fill="#a8a8a8"/><path d="M19.2 371 L23 374 L19.2 377z" fill="none" stroke="#999" stroke-width="1"/><rect x="16.6" y="263.1" width="13" height="13" fill="#45a545" stroke="#9a9a9a" stroke-width="1.2"/><rect x="17.7" y="264.2" width="10.8" height="10.8" fill="none" stroke="#2c4a2c" stroke-width="0.7"/><path transform="translate(16,262.5)" d="M10 2 H12.3 V8.2 Q11 7.2 10 8.6 Q9 10 8.6 12.3 H6.4 Q6 10 5 9.2 Q3.6 8.6 3.2 7.6 Q5 6.2 6.6 6.6 Q8.6 4.2 10 2 Z" fill="#1f6db5"/><rect x="26" y="286.0" width="11.5" height="11.5" fill="#262626" stroke="#707070" stroke-width="1.2"/><rect x="26" y="368.5" width="11.5" height="11.5" fill="#262626" stroke="#707070" stroke-width="1.2"/><rect x="26" y="327" width="11.5" height="11.5" fill="#222" stroke="#6a7a8a" stroke-width="1.2"/><path d="M28.3 332.5 L31 335.8 L36 328.8" stroke="#fff" stroke-width="1.6" fill="none"/></svg>
<svg style="left:0;top:0" width="945" height="663" viewBox="0 0 945 663"><rect x="343.6" y="139.6" width="13" height="13" fill="#45a545" stroke="#9a9a9a" stroke-width="1.2"/><rect x="344.7" y="140.7" width="10.8" height="10.8" fill="none" stroke="#2c4a2c" stroke-width="0.7"/><path transform="translate(343,139)" d="M10 2 H12.3 V8.2 Q11 7.2 10 8.6 Q9 10 8.6 12.3 H6.4 Q6 10 5 9.2 Q3.6 8.6 3.2 7.6 Q5 6.2 6.6 6.6 Q8.6 4.2 10 2 Z" fill="#1f6db5"/><rect x="434.6" y="139.6" width="13" height="13" fill="#45a545" stroke="#9a9a9a" stroke-width="1.2"/><rect x="435.7" y="140.7" width="10.8" height="10.8" fill="none" stroke="#2c4a2c" stroke-width="0.7"/><path transform="translate(434,139)" d="M10 2 H12.3 V8.2 Q11 7.2 10 8.6 Q9 10 8.6 12.3 H6.4 Q6 10 5 9.2 Q3.6 8.6 3.2 7.6 Q5 6.2 6.6 6.6 Q8.6 4.2 10 2 Z" fill="#1f6db5"/><path d="M482.5 143 L489.5 150 M489.5 143 L482.5 150" stroke="#fff" stroke-width="1.3"/><path d="M421 468 h5 l-2.5 2.5z" fill="#ccc"/><path d="M440.5 462.5 h9.5 v5 M440.5 462.5 v10 h5 v-10 M440.5 467.5 h9.5 M445.5 462.5 v5" fill="none" stroke="#b89a80" stroke-width="1"/><path d="M446.5 472.5 h7.5 M450.2 468.8 v7.5" stroke="#9ab0c8" stroke-width="1.2"/><rect x="459.5" y="463" width="4.5" height="3" fill="#c8a888"/><rect x="468" y="469" width="4.5" height="3" fill="#c8a888"/><path d="M461 472 l8 -6" stroke="#8ac" stroke-width="1" stroke-dasharray="1.3 1"/><path d="M469 462 v5.5 M466 464.7 h6" stroke="#aac" stroke-width="0.8"/><rect x="459.5" y="474" width="2.5" height="2" fill="#6c6"/><path d="M462 475 h12" stroke="#8ac" stroke-width="0.8"/><path d="M479.5 463 h11 v11 h-11z M479.5 466.7 h11 M479.5 470.3 h11 M483.2 463 v11 M486.8 463 v11" fill="none" stroke="#8a8a8a" stroke-width="1"/><rect x="497" y="461.5" width="7.5" height="7.3" fill="#2e7a32"/><path d="M504.5 462 v14 M497 468.8 h15" stroke="#888" stroke-width="0.8" stroke-dasharray="1 1"/><circle cx="504.5" cy="468.8" r="1.6" fill="#ddd"/><path d="M516.6 472.5 v-7.5 l5 7.5 v-7.5" stroke="#3aa0e8" stroke-width="1.8" fill="none"/><path d="M523.5 462 v14.5 M524 476 l7 -7.5" stroke="#999" stroke-width="0.9"/><path d="M526 463 q4 0 3 4 M527 466 l2 1.5 l2 -2" stroke="#3aa0e8" stroke-width="1.2" fill="none"/><rect x="343.5" y="490.5" width="13" height="11" fill="#3c3c3c" stroke="#9a9a9a" stroke-width="1"/><rect x="344" y="491" width="12" height="2.3" fill="#3a9ee8"/><path d="M344 495.2 h12 M344 497.6 h12 M344 500 h12 M347.8 493 v8.5 M352 493 v8.5" stroke="#888" stroke-width="0.8"/><path d="M439 493.5 L446 500.5 M446 493.5 L439 500.5" stroke="#e8e8e8" stroke-width="1.2"/><rect x="378.5" y="515.5" width="12.5" height="11" fill="none" stroke="#555" stroke-width="1"/><rect x="379" y="516" width="11.5" height="2" fill="#3a4a5a"/><path d="M380 520.5 h2 M380 523 h2" stroke="#5a4a7a" stroke-width="1"/><path d="M383.5 526 h5 M386 523.5 v5" stroke="#666" stroke-width="1"/><rect x="423.5" y="515.5" width="13" height="12" fill="#3c3c3c" stroke="#a0a0a0" stroke-width="1"/><rect x="424" y="516" width="12" height="2.4" fill="#3a9ee8"/><path d="M425 520.5 h3 M425 523 h3" stroke="#a080e0" stroke-width="1.2"/><path d="M429.5 520.5 h6 M429.5 523 h6" stroke="#888" stroke-width="0.9"/><rect x="426.5" y="525.5" width="8" height="4" fill="#ddd" stroke="#333" stroke-width="0.6"/><rect x="553" y="516" width="7" height="6" fill="#1fb0e8"/><rect x="556.5" y="519.5" width="9.5" height="10" fill="#4a4a4a" stroke="#aaa" stroke-width="0.9"/><path d="M557 522 h9 M557 524.5 h9 M557 527 h9" stroke="#999" stroke-width="0.7"/><rect x="553.5" y="514.5" width="5" height="3" fill="#ddd"/><rect x="672" y="515" width="9" height="7" fill="#4a4a4a" stroke="#aaa" stroke-width="0.9"/><rect x="672.5" y="517.5" width="8" height="1.5" fill="#3a9ee8"/><circle cx="671.5" cy="523" r="3.6" fill="#2a2a2a" stroke="#3aa0e8" stroke-width="1.3"/><path d="M674 525.5 l2.5 2.5" stroke="#c9823a" stroke-width="1.6"/><path d="M359 546.5 V555.5 H350 Z" fill="#555"/></svg>
<svg style="left:0;top:0" width="945" height="663" viewBox="0 0 945 663"><path d="M710 252.5 h12 l-4.8 6 v7.5 l-2.4 0.5 v-8z" fill="none" stroke="#a0a0a0" stroke-width="1.3" stroke-linejoin="round"/><circle cx="720.6" cy="284.5" r="5.5" fill="#3aa04a"/><path d="M717.8 284.5 l2 2 l3.5 -3.8" stroke="#1b261b" stroke-width="1.4" fill="none"/><circle cx="720.7" cy="343.7" r="5.6" fill="#3aa0e8"/><rect x="720" y="342.3" width="1.6" height="4.5" fill="#1d3b54"/><circle cx="720.8" cy="340.5" r="0.95" fill="#1d3b54"/><path d="M712 366.5 l3 3 l3 -3" stroke="#bbb" stroke-width="1.3" fill="none"/><path d="M726.3 423.5 L732.8 417 L734.8 418.8 L736.6 417.3 L739.8 420.8 L736.2 423.8 L739.8 427 L736.6 429.8 L732.6 426.2 L730.5 427.8 Z" fill="#1f5a1f" stroke="#9aa59a" stroke-width="0.9" stroke-linejoin="round"/><rect x="751" y="419.5" width="4.5" height="8.5" fill="#3a8a3a"/><path d="M757 418.5 h5.5 v11 h-5.5" fill="none" stroke="#888" stroke-width="1"/><path d="M750.5 419.5 h8 M750.5 428 h8 M750.5 419.5 v8.5" stroke="#999" stroke-width="0.9" fill="none"/><circle cx="750.5" cy="419.5" r="1.5" fill="#aaa"/><circle cx="758.5" cy="419.5" r="1.5" fill="#aaa"/><circle cx="750.5" cy="428" r="1.5" fill="#aaa"/><circle cx="758.5" cy="428" r="1.5" fill="#aaa"/><path d="M773.5 428.5 L778.5 423 L783.5 428.5" stroke="#3aa04a" stroke-width="1.1" fill="none"/><circle cx="773.5" cy="428.5" r="1.5" fill="#3cb84a"/><circle cx="783.5" cy="428.5" r="1.5" fill="#3cb84a"/><circle cx="778.5" cy="423" r="1.5" fill="#e05a28"/><circle cx="800.9" cy="423.4" r="6.2" fill="#2d5e2d" stroke="#7a9a7a" stroke-width="0.9"/><rect x="818.5" y="416.5" width="10.5" height="13.5" fill="#2d5e2d" stroke="#7a9a7a" stroke-width="0.9"/><ellipse cx="845.8" cy="423.2" rx="6.8" ry="4.3" fill="#2d5e2d" stroke="#7a9a7a" stroke-width="0.9"/><path d="M862.5 419 q2 -3 3 0 q-2 3 1 5 q3 1 2 -2 q2 -1 3 2 q-1 3 -3 2 q3 3 5 5" stroke="#bbb" stroke-width="0.9" fill="none"/><path d="M890 419 a4.5 4.5 0 0 0 0 9z" fill="#2d5e2d"/><path d="M892 416.5 h5.5 v13.5 h-5.5 M892 419 q-2 0 -2 1 M892 428 q-2 0 -2 -1" stroke="#888" stroke-width="0.9" fill="none"/><path d="M913.5 417.5 L907.5 428 L913.5 428" stroke="#c8502a" stroke-width="1.1" fill="none"/><path d="M913.5 417.5 H919.7 V428 H913.5" stroke="#aaa" stroke-width="1" fill="none"/><circle cx="913.5" cy="417.5" r="1.4" fill="#3cb84a"/><circle cx="919.7" cy="417.5" r="1.4" fill="#3cb84a"/><circle cx="919.7" cy="428" r="1.4" fill="#3cb84a"/><path d="M913 426 v4 M911 428 h4" stroke="#ddd" stroke-width="0.8"/><path d="M933 430 V420 h4 v10 M939 430 V418 l2 2 h3 v10" fill="#333" stroke="#999" stroke-width="0.9"/><circle cx="933.5" cy="418" r="2" fill="#e6c43a"/></svg>
</body></html>
